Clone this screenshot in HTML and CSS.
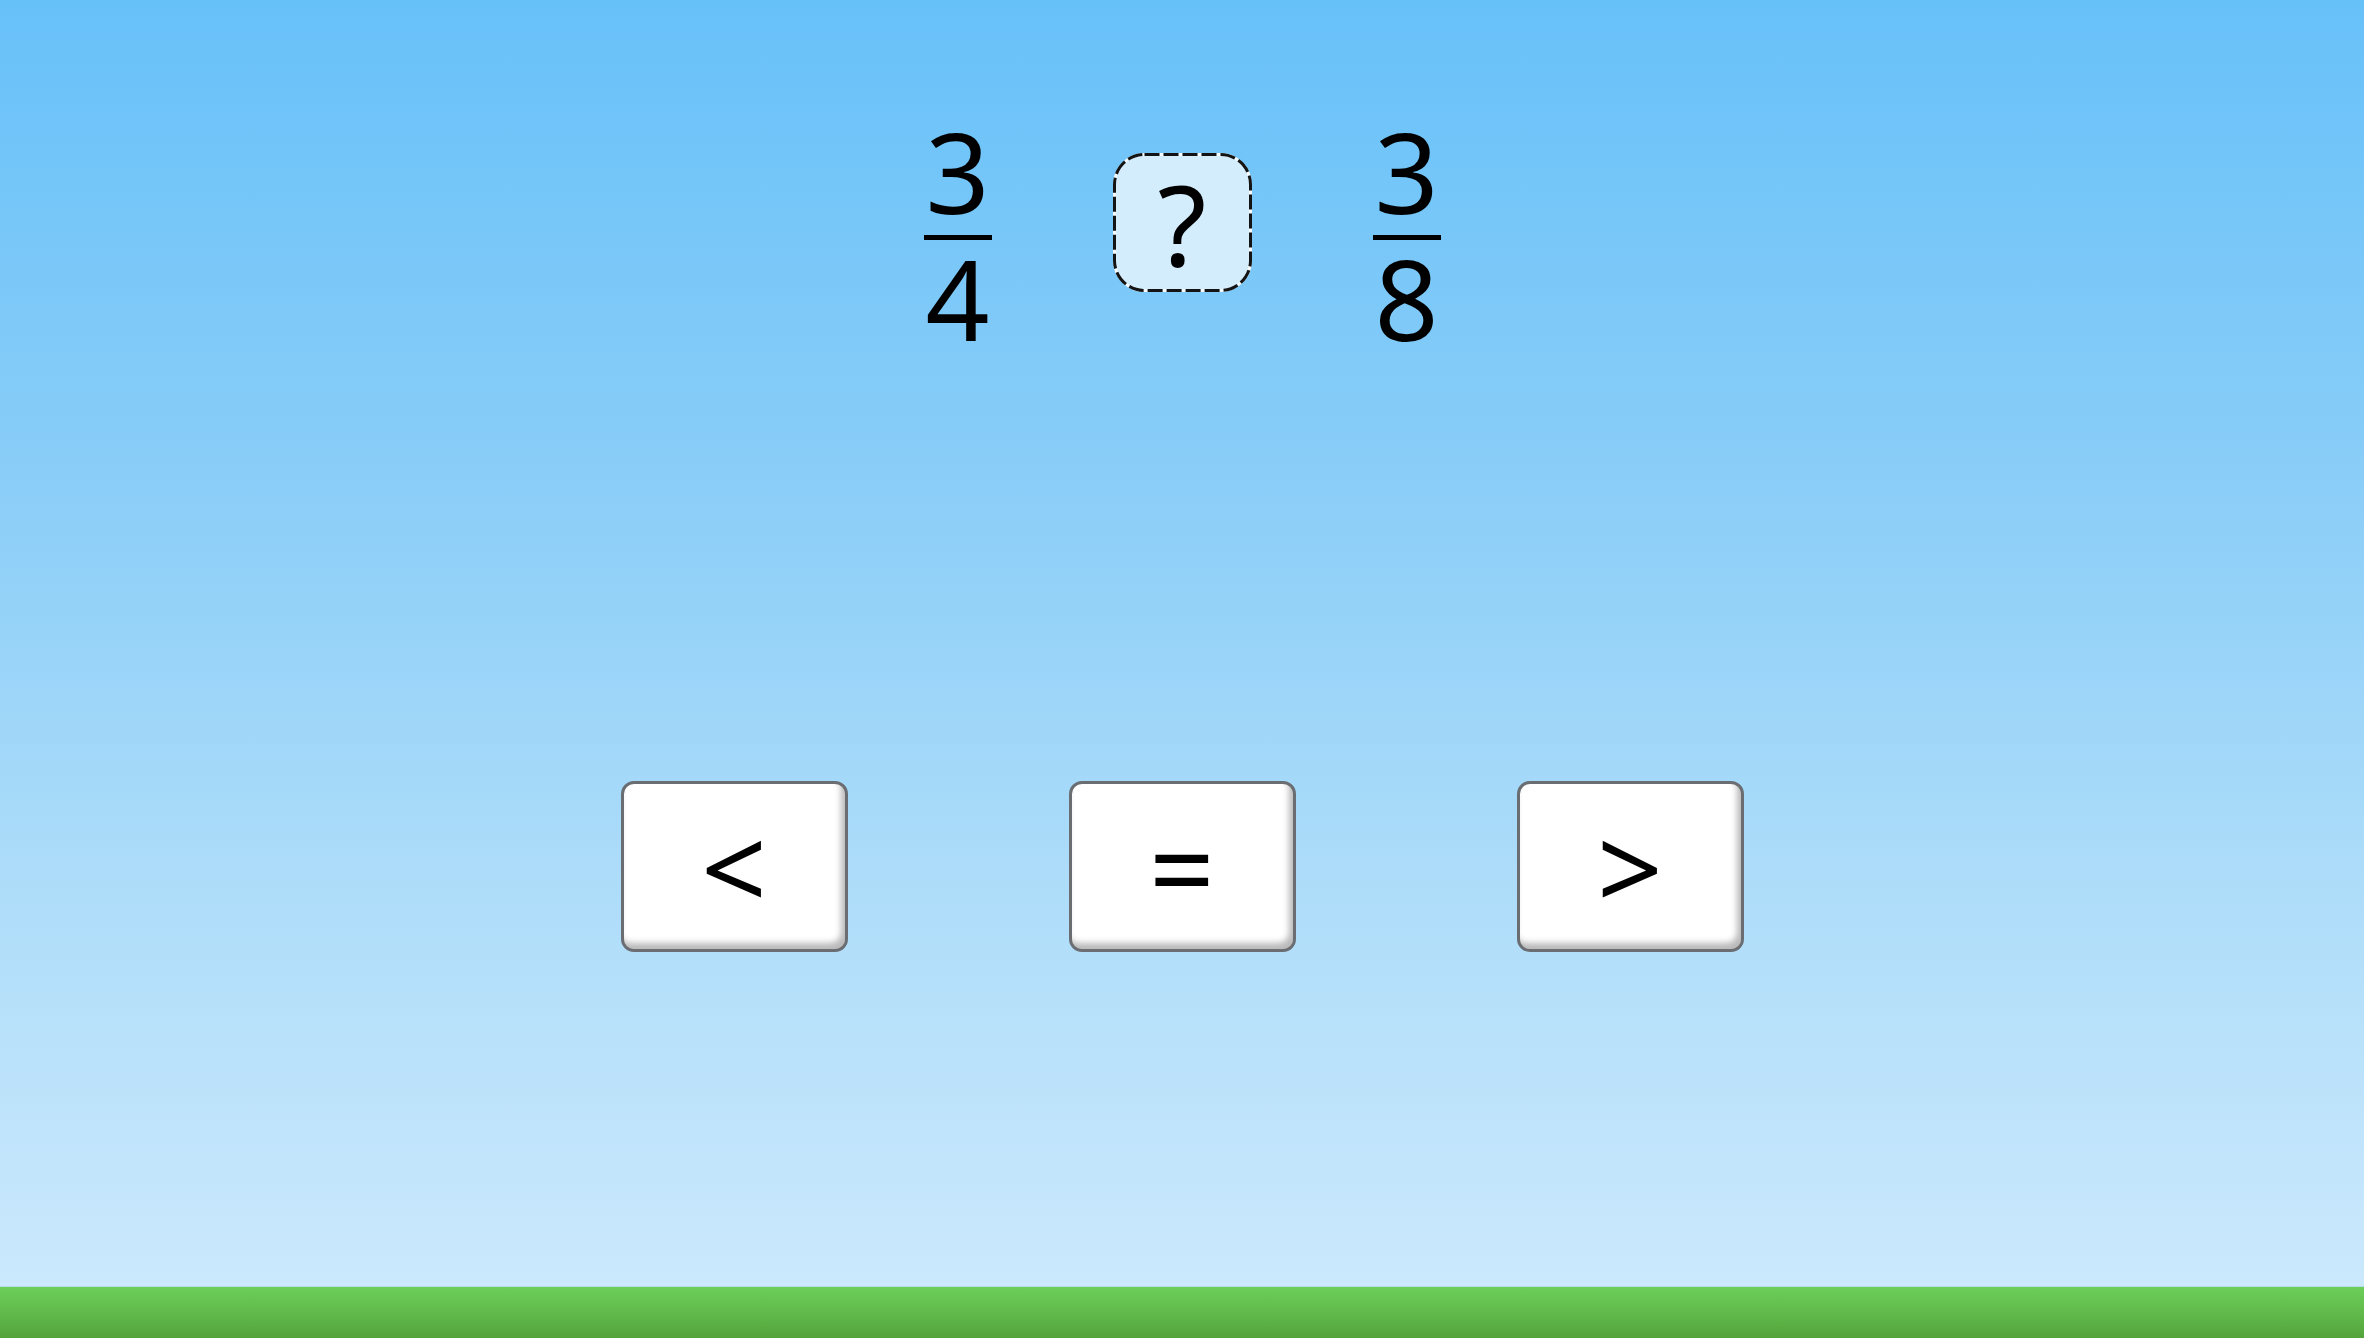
FILE: index.html
```html
<!DOCTYPE html>
<html lang="en">
<head>
<meta charset="utf-8">
<title>Compare fractions</title>
<link rel="stylesheet" href="styles.css">
</head>
<body>
<div class="scene">
  <main class="stage">
    <div class="problem">
      <div class="fraction">
        <div class="num">3</div>
        <div class="bar"></div>
        <div class="den">4</div>
      </div>
      <div class="answer">
        <svg class="answer-frame" width="139" height="139" viewBox="0 0 139 139" aria-hidden="true">
          <rect x="1.5" y="1.5" width="136" height="136" rx="30" ry="30" fill="#d4edfd" stroke="#f4fbff" stroke-width="3"/>
          <rect x="1.5" y="1.5" width="136" height="136" rx="30" ry="30" fill="none" stroke="#141414" stroke-width="3" stroke-dasharray="15 4"/>
        </svg>
        <span class="answer-text">?</span>
      </div>
      <div class="fraction">
        <div class="num">3</div>
        <div class="bar"></div>
        <div class="den">8</div>
      </div>
    </div>
    <div class="choices">
      <button class="choice">&lt;</button>
      <button class="choice">=</button>
      <button class="choice">&gt;</button>
    </div>
  </main>
  <footer class="grass"></footer>
</div>
</body>
</html>
```
FILE: styles.css
```css
html, body {
  margin: 0;
  padding: 0;
  height: 100%;
}
body {
  font-family: "Noto Sans", "DejaVu Sans", sans-serif;
  color: #000;
  overflow: hidden;
}
.scene {
  height: 1338px;
  display: flex;
  flex-direction: column;
  background: linear-gradient(to bottom, #67c1f9 0%, #89cdf8 35%, #acdcf9 65%, #cfeafd 100%);
}
.stage {
  flex: 1;
  display: flex;
  flex-direction: column;
  align-items: center;
  padding-top: 127px;
}
.problem {
  display: flex;
  align-items: flex-start;
  gap: 121px;
}
.fraction {
  width: 68px;
  display: flex;
  flex-direction: column;
  align-items: center;
}
.num, .den {
  font-size: 112px;
  line-height: 88px;
  height: 88px;
}
.bar {
  width: 68px;
  height: 5px;
  background: #000;
  margin: 20px 0 14px;
}
.answer {
  position: relative;
  margin-top: 26px;
  width: 139px;
  height: 139px;
  display: flex;
  align-items: center;
  justify-content: center;
}
.answer-frame {
  position: absolute;
  left: 0;
  top: 0;
}
.answer-text {
  position: relative;
  font-size: 112px;
  line-height: 112px;
}
.choices {
  margin-top: 439px;
  display: flex;
  gap: 221px;
}
.choice {
  width: 227px;
  height: 171px;
  box-sizing: border-box;
  border: 3px solid #6a6e72;
  border-radius: 13px;
  background: #fff;
  box-shadow: inset -4px -6px 6px rgba(0, 0, 0, 0.28);
  font-family: "Noto Sans", "DejaVu Sans", sans-serif;
  font-size: 115px;
  line-height: 115px;
  color: #000;
  display: flex;
  align-items: center;
  justify-content: center;
  padding: 0;
}
.grass {
  height: 51px;
  border-top: 1px solid #b4dce6;
  background: linear-gradient(to bottom, #6ccf59 0%, #60b84a 55%, #53a33a 100%);
}
```
